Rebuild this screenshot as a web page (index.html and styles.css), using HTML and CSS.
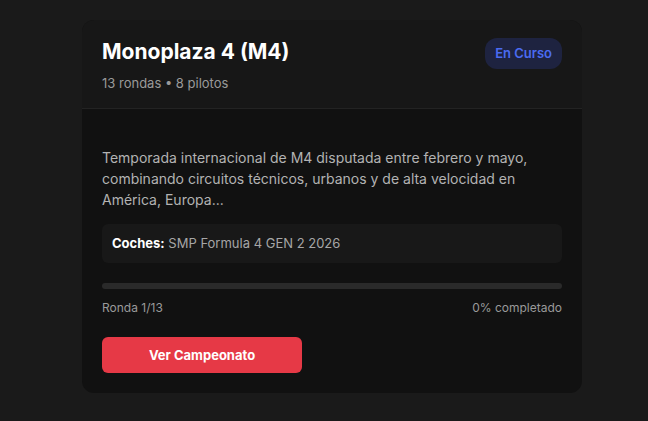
FILE: index.html
```html
<!DOCTYPE html>
<html lang="es">
<head>
<meta charset="utf-8">
<link rel="stylesheet" href="styles.css">
</head>
<body>
<div class="page">
  <div class="card">
    <div class="card-header">
      <div class="head-text">
        <h2 class="title">Monoplaza 4 (M4)</h2>
        <div class="meta">13 rondas • 8 pilotos</div>
      </div>
      <span class="badge">En Curso</span>
    </div>
    <div class="card-body">
      <p class="desc">Temporada internacional de M4 disputada entre febrero y mayo, combinando circuitos técnicos, urbanos y de alta velocidad en América, Europa...</p>
      <div class="cars"><strong>Coches:</strong> SMP Formula 4 GEN 2 2026</div>
      <div class="progress"><div class="progress-fill" style="width:0%"></div></div>
      <div class="progress-info"><span>Ronda 1/13</span><span>0% completado</span></div>
      <button class="btn">Ver Campeonato</button>
    </div>
  </div>
</div>
</body>
</html>
```
FILE: styles.css
```css
* { box-sizing: border-box; }
html, body { margin: 0; padding: 0; }
body {
  background: #1a1a1a;
  font-family: Inter, "Noto Sans", sans-serif;
  color: #e6e6e6;
  width: 648px;
  height: 421px;
  overflow: hidden;
}
.page {
  padding: 20px 66px 0 82px;
}
.card {
  width: 500px;
  background: #111111;
  border-radius: 12px;
  overflow: hidden;
}
.card-header {
  background: #171717;
  border-bottom: 1px solid #232323;
  height: 89px;
  padding: 18px 20px 0 20px;
  display: flex;
  justify-content: space-between;
  align-items: flex-start;
}
.title {
  margin: 0;
  font-size: 21px;
  font-weight: 700;
  color: #ffffff;
  line-height: 28px;
}
.meta {
  margin-top: 8px;
  font-size: 13px;
  color: #9a9a9a;
  line-height: 18px;
}
.badge {
  background: #1e2340;
  color: #4b6bf0;
  font-size: 13px;
  font-weight: 600;
  padding: 0 10px;
  height: 31px;
  line-height: 31px;
  border-radius: 12px;
}
.card-body {
  padding: 38px 20px 20px 20px;
}
.desc {
  margin: 0;
  font-size: 14px;
  line-height: 21px;
  color: #b3b3b3;
}
.cars {
  margin-top: 14px;
  background: #181818;
  border-radius: 6px;
  padding: 10px 10px;
  height: 39px;
  font-size: 13px;
  line-height: 19px;
  color: #a6a6a6;
}
.cars strong {
  color: #ffffff;
  font-weight: 700;
}
.progress {
  margin-top: 20px;
  height: 6px;
  background: #2a2a2a;
  border-radius: 3px;
  overflow: hidden;
}
.progress-fill {
  height: 100%;
  background: #e63946;
}
.progress-info {
  margin-top: 11px;
  display: flex;
  justify-content: space-between;
  font-size: 12px;
  line-height: 16px;
  color: #9a9a9a;
}
.btn {
  margin-top: 21px;
  display: block;
  width: 200px;
  height: 36px;
  border: none;
  border-radius: 6px;
  background: #e63946;
  color: #ffffff;
  font-family: Inter, "Noto Sans", sans-serif;
  font-size: 13px;
  font-weight: 700;
  cursor: pointer;
}
```
